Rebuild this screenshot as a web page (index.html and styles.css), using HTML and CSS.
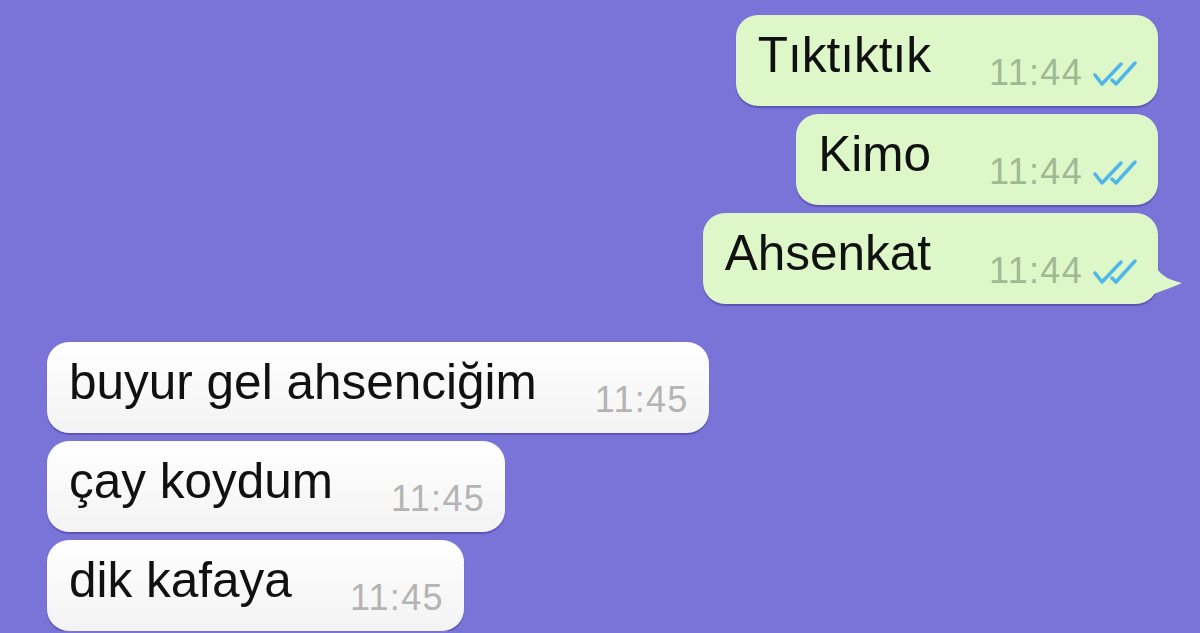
FILE: index.html
```html
<!DOCTYPE html>
<html>
<head>
    <title>Sohbet</title>
    <link rel="stylesheet" href="styles.css">
</head>
<body>

<div class="chat">
    <div class="msg sent">
        <span class="text">Tıktıktık</span>
        <span class="meta"><span class="time">11:44</span>
            <svg class="ticks" viewBox="0 0 46 26"><path d="M3 14 L10 23 L29 3 M20 19 L24 23 L43 2" /></svg>
        </span>
    </div>
    <div class="msg sent">
        <span class="text">Kimo</span>
        <span class="meta"><span class="time">11:44</span>
            <svg class="ticks" viewBox="0 0 46 26"><path d="M3 14 L10 23 L29 3 M20 19 L24 23 L43 2" /></svg>
        </span>
    </div>
    <div class="msg sent tail">
        <span class="text">Ahsenkat</span>
        <span class="meta"><span class="time">11:44</span>
            <svg class="ticks" viewBox="0 0 46 26"><path d="M3 14 L10 23 L29 3 M20 19 L24 23 L43 2" /></svg>
        </span>
        <svg class="tail-shape" viewBox="0 0 34 50"><path d="M0 0 C6 20 12 28 33 33 C22 38 14 40 0 46 Z" /></svg>
    </div>

    <div class="msg received first">
        <span class="text">buyur gel ahsenciğim</span>
        <span class="meta"><span class="time">11:45</span></span>
    </div>
    <div class="msg received">
        <span class="text">çay koydum</span>
        <span class="meta"><span class="time">11:45</span></span>
    </div>
    <div class="msg received">
        <span class="text">dik kafaya</span>
        <span class="meta"><span class="time">11:45</span></span>
    </div>
</div>

</body>
</html>
```

FILE: styles.css
```css
body {
    margin: 0;
    background-color: #7a74d9;
    font-family: "Liberation Sans", Arial, sans-serif;
    overflow: hidden;
}

.chat {
    display: flex;
    flex-direction: column;
    gap: 8px;
    padding: 15px 42px 0 47px;
}

.msg {
    position: relative;
    display: flex;
    align-items: flex-start;
    gap: 58px;
    padding: 12px 20px 13px 22px;
    border-radius: 22px;
    box-shadow: 0 2px 1px rgba(40, 30, 110, 0.35);
}

.msg .text {
    font-size: 49.5px;
    line-height: 56px;
    color: #111;
    white-space: nowrap;
}

.meta {
    display: flex;
    align-items: center;
    gap: 9px;
    margin-top: 26px;
    height: 40px;
}

.time {
    font-size: 36px;
    line-height: 40px;
    letter-spacing: 1.3px;
}

.sent {
    align-self: flex-end;
    background-color: #ddf7c8;
}

.sent .time {
    color: #9fb995;
}

.received {
    align-self: flex-start;
    padding-right: 20px;
    background: linear-gradient(#ffffff, #f3f3f3);
}

.received .time {
    color: #b4b4b4;
}

.received.first {
    margin-top: 30px;
}

.ticks {
    width: 46px;
    height: 26px;
    margin-top: 2px;
}

.ticks path {
    fill: none;
    stroke: #4fb6ec;
    stroke-width: 3.5;
    stroke-linecap: round;
    stroke-linejoin: round;
}

.tail-shape {
    position: absolute;
    right: -25px;
    bottom: 4px;
    width: 34px;
    height: 50px;
}

.tail-shape path {
    fill: #ddf7c8;
}
```
